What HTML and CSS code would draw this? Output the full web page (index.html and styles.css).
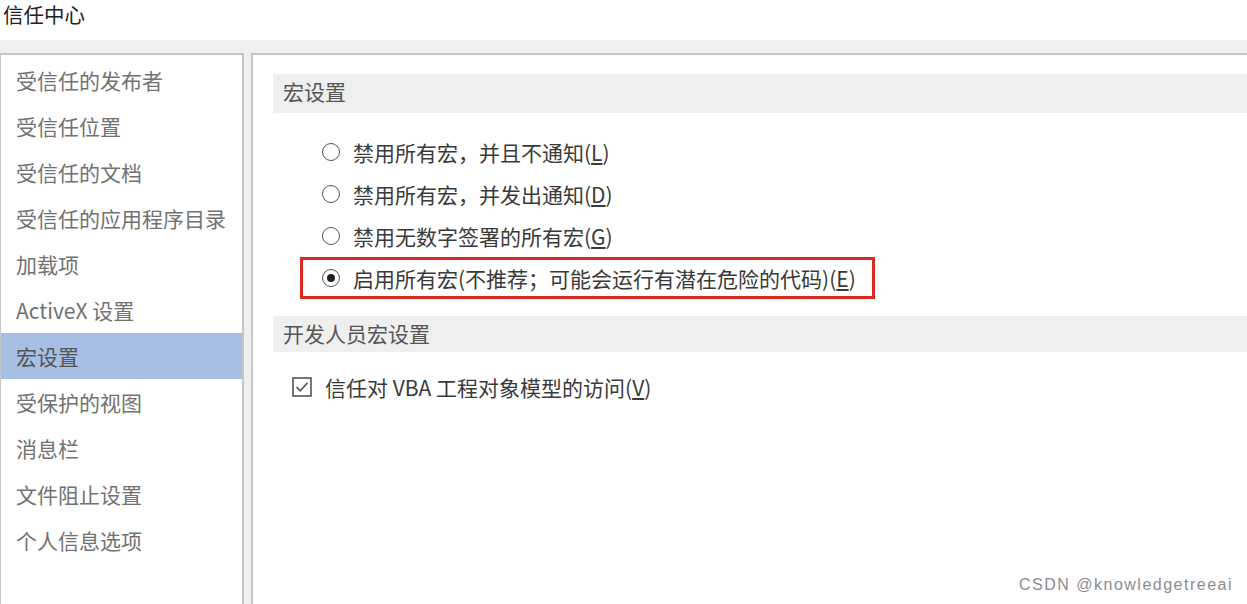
FILE: index.html
```html
<!DOCTYPE html>
<html lang="zh-CN">
<head>
  <meta charset="UTF-8">
  <title>信任中心</title>
  <link rel="stylesheet" href="styles.css">
</head>
<body>
  <div class="title">信任中心</div>
  <div class="main">
    <ul class="nav">
      <li>受信任的发布者</li>
      <li>受信任位置</li>
      <li>受信任的文档</li>
      <li>受信任的应用程序目录</li>
      <li>加载项</li>
      <li>ActiveX 设置</li>
      <li class="active">宏设置</li>
      <li>受保护的视图</li>
      <li>消息栏</li>
      <li>文件阻止设置</li>
      <li>个人信息选项</li>
    </ul>
    <div class="content">
      <div class="section-head">宏设置</div>
      <div class="options">
        <div class="option"><span class="radio"></span>禁用所有宏，并且不通知(<u>L</u>)</div>
        <div class="option"><span class="radio"></span>禁用所有宏，并发出通知(<u>D</u>)</div>
        <div class="option"><span class="radio"></span>禁用无数字签署的所有宏(<u>G</u>)</div>
        <div class="option picked"><span class="radio on"></span>启用所有宏(不推荐；可能会运行有潜在危险的代码)(<u>E</u>)</div>
      </div>
      <div class="section-head second">开发人员宏设置</div>
      <div class="check-row">
        <svg class="check" width="20" height="20" viewBox="0 0 20 20">
          <rect x="1" y="1" width="18" height="18" fill="none" stroke="#555" stroke-width="1.6"/>
          <path d="M4.5 10 L8.3 13.8 L15.5 5.8" fill="none" stroke="#555" stroke-width="1.7"/>
        </svg>
        信任对 VBA 工程对象模型的访问(<u>V</u>)
      </div>
    </div>
  </div>
  <div class="watermark">CSDN @knowledgetreeai</div>
</body>
</html>
```

FILE: styles.css
```css
body { margin: 0; background: #fff; font-family: "Noto Sans CJK SC", "Noto Sans", sans-serif; color: #333; height: 604px; overflow: hidden; }
.title { height: 40px; padding-left: 3px; font-size: 20.5px; line-height: 29px; color: #222; }
.main { display: flex; gap: 7px; background: #f0f0f0; padding-top: 13px; height: 551px; }
.nav { list-style: none; margin: 0; padding: 2px 0 0; width: 241px; background: #fff; border: 2px solid #c6c6c6; border-left: 1px solid #c6c6c6; border-bottom: none; }
.nav li { height: 46px; line-height: 46px; padding-left: 15px; font-size: 21px; color: #727272; white-space: nowrap; }
.nav li.active { background: #a7bfe4; color: #555; }
.content { flex: 1; background: #fff; border-left: 2px solid #c6c6c6; border-top: 2px solid #c6c6c6; padding: 19px 0 0 20px; }
.section-head { height: 39px; line-height: 35px; background: #efefef; padding-left: 10px; font-size: 21px; color: #555; }
.section-head.second { height: 36px; line-height: 34px; margin-top: 17px; }
.options { margin-top: 18px; }
.option { display: flex; align-items: center; height: 42px; padding-left: 49px; font-size: 21px; color: #3a3a3a; box-sizing: border-box; }
.option.picked { width: fit-content; margin-left: 27px; padding: 0 16px 0 19px; border: 3px solid #dc2a22; }
.radio { width: 18px; height: 18px; box-sizing: border-box; border: 1.6px solid #555; border-radius: 50%; margin-right: 13px; display: flex; align-items: center; justify-content: center; }
.radio.on::after { content: ""; width: 8px; height: 8px; border-radius: 50%; background: #222; }
.check-row { display: flex; align-items: center; height: 40px; margin-top: 15px; padding-left: 19px; font-size: 21px; color: #3a3a3a; }
.check { margin-right: 13px; }
u { text-underline-offset: 2px; }
.watermark { position: absolute; right: 14px; bottom: 10px; font-family: "Liberation Sans", sans-serif; font-size: 16px; letter-spacing: 1.5px; color: #8c8c8c; }
```
